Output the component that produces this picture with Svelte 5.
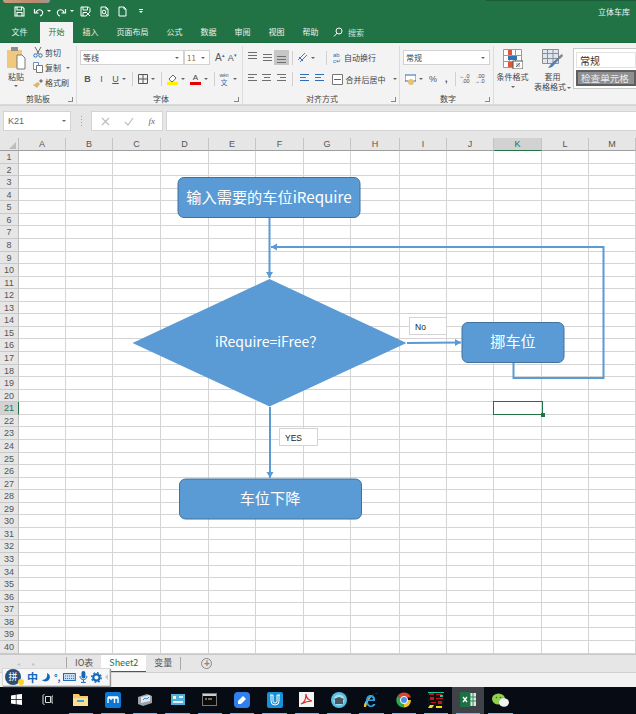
<script>
  const tabs = ["文件", "开始", "插入", "页面布局", "公式", "数据", "审阅", "视图", "帮助"];
  const cols = ["A", "B", "C", "D", "E", "F", "G", "H", "I", "J", "K", "L", "M"];
  const rows = Array.from({ length: 40 }, (_, i) => i + 1);
</script>

<div class="app">
  <div class="photo"></div>
  <div class="title-shadow"></div>

  <header class="titlebar">
    <div class="qat">
      <svg width="11" height="11" viewBox="0 0 11 11"><path d="M1 1h7.5L10 2.500V10H1zM3 1v3h4.500V1M3 10V6.500h5V10" fill="none" stroke="#fff" stroke-width="1.100" /></svg>
      <svg class="undo" width="11" height="11" viewBox="0 0 11 11"><path d="M3 6.500C4 3 8 3 9.500 5.500 10 7.500 8.500 9.500 7 10M1.500 3v4h4" fill="none" stroke="#fff" stroke-width="1.200" /></svg>
      <i class="caret light"></i>
      <svg class="redo" width="11" height="11" viewBox="0 0 11 11"><path d="M8 6.500C7 3 3 3 1.500 5.500 1 7.500 2.500 9.500 4 10M9.500 3v4h-4" fill="none" stroke="#fff" stroke-width="1.200" /></svg>
      <i class="caret light"></i>
      <svg class="save2" width="11" height="11" viewBox="0 0 11 11"><path d="M1 1h7.500L10 2.500V6M6 10H1V1M3 1v3h4.500V1M3 10V6.500h3M6 6l4 4M10 6l-4 4" fill="none" stroke="#fff" stroke-width="1" /></svg>
      <svg class="preview" width="11" height="11" viewBox="0 0 11 11"><path d="M2 10V1h5l2 2v7zM7 1v2h2" fill="none" stroke="#fff" /><circle cx="5" cy="6" r="1.800" fill="none" stroke="#fff" /><path d="M6.500 7.500L9 10" stroke="#fff" /></svg>
      <svg class="newdoc" width="11" height="11" viewBox="0 0 11 11"><path d="M2 10V1h5l2 2v7zM7 1v2h2" fill="none" stroke="#fff" /></svg>
      <span class="more">
        <b></b>
        <i class="caret light"></i>
      </span>
    </div>
    <span class="doc-name">立体车库</span>
  </header>

  <nav class="tabs">
    {#each tabs as tab}
      <span class="tab" class:active={tab === "开始"}>{tab}</span>
    {/each}
    <span class="search">
      <svg width="10" height="10" viewBox="0 0 10 10"><circle cx="6" cy="4" r="3" fill="none" stroke="#fff" /><path d="M4 6.200L1 9.500" stroke="#fff" /></svg>
      搜索
    </span>
  </nav>

  <section class="ribbon">
    <div class="group clipboard">
      <div class="group-body">
        <div class="paste">
          <svg width="19" height="23" viewBox="0 0 19 23">
            <rect x="0" y="3" width="15" height="18" fill="#f0c97f" />
            <rect x="4" y="0" width="7" height="4" fill="#8f8f8f" />
            <path d="M10 8h5l3 3v11h-8z" fill="#fff" stroke="#7a7a7a" />
          </svg>
          <span>粘贴</span>
          <i class="caret"></i>
        </div>
        <div class="clip-list">
          <div class="clip-item">
            <svg width="10" height="11" viewBox="0 0 10 11"><path d="M2 0l4 7M8 0L4 7" stroke="#666" fill="none" /><circle cx="2.500" cy="8.500" r="1.700" fill="none" stroke="#2f6db5" /><circle cx="7.500" cy="8.500" r="1.700" fill="none" stroke="#2f6db5" /></svg>
            剪切
          </div>
          <div class="clip-item">
            <svg width="10" height="11" viewBox="0 0 10 11"><path d="M.5.500h5v7h-5z" fill="#fff" stroke="#6c8ebf" /><path d="M3.500 3.500h6v7h-6z" fill="#fff" stroke="#777" /></svg>
            复制
            <i class="caret"></i>
          </div>
          <div class="clip-item">
            <svg width="10" height="10" viewBox="0 0 10 10"><path d="M0 7l5-3 2 2-3 4z" fill="#e0b56a" /><path d="M6 3l2-2 2 2-2 2z" fill="#777" /></svg>
            格式刷
          </div>
        </div>
      </div>
      <div class="group-label">剪贴板<i class="launcher"></i></div>
    </div>

    <div class="group font">
      <div class="group-body stack">
        <div class="row first">
          <div class="select font-name"><span>等线</span><i class="caret"></i></div>
          <div class="select font-size"><span>11</span><i class="caret"></i></div>
          <span class="glyph grow">A<sup>▴</sup></span>
          <span class="glyph shrink">A<sup>▾</sup></span>
        </div>
        <div class="row second">
          <b class="glyph fmt">B</b>
          <em class="glyph fmt">I</em>
          <u class="glyph fmt">U</u>
          <i class="caret"></i>
          <i class="sep"></i>
          <svg width="10" height="10" viewBox="0 0 10 10"><path d="M.5.500h9v9h-9zM5 .5v9M.5 5h9" fill="none" stroke="#555" /></svg>
          <i class="caret"></i>
          <i class="sep"></i>
          <span class="colored">
            <svg width="11" height="8" viewBox="0 0 11 8"><path d="M2 5l4-4 3 3-3 3.500H4z" fill="#fff" stroke="#666" /></svg>
            <i class="bar yellow"></i>
          </span>
          <i class="caret"></i>
          <span class="colored text-a">A<i class="bar red"></i></span>
          <i class="caret"></i>
          <i class="sep"></i>
          <span class="wen"><small>wén</small><span>文</span></span>
          <i class="caret"></i>
        </div>
      </div>
      <div class="group-label">字体<i class="launcher"></i></div>
    </div>

    <div class="group align">
      <div class="group-body stack">
        <div class="row first">
          <span class="lines top"><b></b><b></b><b class="short"></b></span>
          <span class="lines middle"><b></b><b></b><b class="short"></b></span>
          <span class="lines bottom on"><b></b><b></b><b class="short"></b></span>
          <i class="sep"></i>
          <svg width="11" height="11" viewBox="0 0 11 11"><path d="M1 8L8 1M3 10l7-7" stroke="#777" fill="none" /><path d="M2 5l4 4" stroke="#2f6db5" /></svg>
          <i class="caret"></i>
          <i class="sep wide"></i>
          <span class="ab"><small>ab</small><small>c↵</small></span>
          <span class="align-text">自动换行</span>
        </div>
        <div class="row second">
          <span class="lines"><b></b><b class="short"></b><b></b></span>
          <span class="lines centered"><b></b><b class="short"></b><b></b></span>
          <span class="lines right"><b></b><b class="short"></b><b></b></span>
          <i class="sep"></i>
          <span class="lines indent"><b></b><b class="short"></b><b></b></span>
          <span class="lines indent"><b></b><b class="short"></b><b></b></span>
          <svg class="merge" width="11" height="11" viewBox="0 0 11 11"><path d="M.5.500h10v10H.5z" fill="#fff" stroke="#777" /><path d="M2 5.500h7" stroke="#2f6db5" /></svg>
          <span class="align-text">合并后居中</span>
          <i class="caret wide-caret"></i>
        </div>
      </div>
      <div class="group-label">对齐方式<i class="launcher"></i></div>
    </div>

    <div class="group number">
      <div class="group-body stack">
        <div class="row first">
          <div class="select number-format"><span>常规</span><i class="caret"></i></div>
        </div>
        <div class="row second">
          <svg width="11" height="11" viewBox="0 0 11 11"><rect x="0" y="1" width="11" height="6" fill="#fff" stroke="#2f6db5" /><circle cx="6" cy="8" r="3" fill="#eac26f" /></svg>
          <i class="caret"></i>
          <span class="pct">%</span>
          <span class="comma">,</span>
          <i class="sep"></i>
          <span class="dec"><small>←.0</small><small>.00</small></span>
          <span class="dec"><small>.00</small><small>→.0</small></span>
        </div>
      </div>
      <div class="group-label">数字<i class="launcher"></i></div>
    </div>

    <div class="group styles">
      <div class="style-btn cond">
        <svg width="20" height="20" viewBox="0 0 20 20">
          <path d="M.5.500h18v18H.5zM.5 6.500h18M.5 12.500h18M6.500.5v18M12.500.5v18" fill="#fff" stroke="#9a9a9a" />
          <rect x="5" y="1" width="4" height="5" fill="#d9583b" />
          <rect x="5" y="7" width="9" height="4" fill="#2e75b6" />
          <rect x="5" y="13" width="5" height="5" fill="#d9583b" />
          <rect x="10" y="12" width="10" height="8" fill="#fff" stroke="#555" />
          <path d="M13 18l4-4M13 15h4M13 17h4" stroke="#555" stroke-width=".7" />
        </svg>
        <span>条件格式</span>
        <i class="caret"></i>
      </div>
      <div class="style-btn table">
        <svg width="21" height="20" viewBox="0 0 21 20">
          <path d="M.5.500h16v14H.5zM.5 4.500h16M.5 9.500h16M5.500.5v14M11 .5v14" fill="#dfe6f0" stroke="#8d8d8d" />
          <path d="M20 5L9 15l-3 4c2 0 5-1 6-3l8-9z" fill="#4f7fb8" />
          <path d="M20 5l-4 3 2 2 3-3z" fill="#888" />
        </svg>
        <span>套用</span>
        <span>表格格式<i class="caret inline"></i></span>
      </div>
      <div class="gallery">
        <div class="cell-style plain">常规</div>
        <div class="cell-style check">检查单元格</div>
      </div>
    </div>
  </section>

  <div class="formula-bar">
    <div class="name-box"><span>K21</span><i class="caret"></i></div>
    <div class="dots"></div>
    <div class="fx-box">
      <svg width="9" height="9" viewBox="0 0 9 9"><path d="M1 1l7 7M8 1L1 8" stroke="#bdbdbd" stroke-width="1.200" /></svg>
      <svg width="10" height="9" viewBox="0 0 10 9"><path d="M1 5l3 3 5-7" fill="none" stroke="#bdbdbd" stroke-width="1.200" /></svg>
      <em>fx</em>
    </div>
    <div class="formula-input"></div>
  </div>

  <main class="sheet">
    <div class="grid">
      <div class="corner"><b></b></div>
      {#each cols as col}
        <div class="col-head" class:selected={col === "K"}>{col}</div>
      {/each}
      {#each rows as row}
        <div class="row-head" class:selected={row === 21}>{row}</div>
        {#each cols as col}
          <div class="cell" class:current={col === "K" && row === 21}></div>
        {/each}
      {/each}
    </div>

    <svg class="chart" width="636" height="516" viewBox="0 138 636 516">
      <defs>
        <marker id="arrow" markerUnits="userSpaceOnUse" markerWidth="8" markerHeight="8" refX="6" refY="3.500" orient="auto">
          <path d="M0 0L6 3.500 0 7z" fill="#5b9bd5" />
        </marker>
      </defs>

      <path d="M269.500 218V278" class="link" marker-end="url(#arrow)" />
      <path d="M513.500 363V378H603.500V247H271" class="link loop" marker-end="url(#arrow)" />
      <path d="M407 343L461 342.500" class="link" marker-end="url(#arrow)" />
      <path d="M270 407V478" class="link" marker-end="url(#arrow)" />

      <rect class="shape" x="178" y="177.500" width="182" height="40" rx="6" />
      <text x="269" y="203" class="label large">输入需要的车位iRequire</text>

      <path d="M132.500 343L269.500 279 406.500 343 269.500 406.500z" class="diamond" />
      <text x="215" y="347" class="label start">iRequire=iFree？</text>

      <rect class="shape" x="462" y="322.500" width="102" height="40" rx="6" />
      <text x="513" y="347" class="label large">挪车位</text>

      <rect class="shape" x="179.500" y="479" width="182" height="40" rx="6" />
      <text x="270" y="504" class="label large">车位下降</text>

      <rect class="note" x="409.500" y="317.500" width="37" height="17" />
      <text x="415" y="330" class="note-text">No</text>
      <rect class="note" x="279.500" y="428.500" width="38" height="17" />
      <text x="285" y="441" class="note-text">YES</text>
    </svg>

    <div class="cell-cursor"><b></b></div>
  </main>

  <div class="sheet-tabs">
    <div class="nav-arrows"><span>◂</span><span>▸</span></div>
    <i class="tab-sep"></i>
    <span class="sheet-tab">IO表</span>
    <span class="sheet-tab active">Sheet2</span>
    <span class="sheet-tab">变量</span>
    <i class="tab-sep"></i>
    <span class="add-sheet">+</span>
  </div>

  <div class="statusbar"></div>

  <div class="ime">
    <span class="ime-logo"><em>拼</em><b></b></span>
    <span class="ime-zh">中</span>
    <svg width="10" height="11" viewBox="0 0 10 11"><path d="M6 1C7 5 5 8 1 8c3 3 8 1 8-3C9 3 8 2 6 1z" fill="#1467b8" /></svg>
    <span class="ime-dot">°,</span>
    <svg width="13" height="8" viewBox="0 0 13 8"><rect x=".5" y=".5" width="12" height="7" fill="#cfe2f5" stroke="#1467b8" /><path d="M2 3h9M2 5.500h9" stroke="#1467b8" stroke-dasharray="1 1" /></svg>
    <svg width="9" height="12" viewBox="0 0 9 12"><rect x="2.500" y="0" width="4" height="7.500" rx="2" fill="#1467b8" /><path d="M1 5c0 5 7 5 7 0M4.500 9v2M2 11.500h5" fill="none" stroke="#1467b8" /></svg>
    <svg width="11" height="11" viewBox="0 0 11 11"><circle cx="5.500" cy="5.500" r="3.200" fill="none" stroke="#1467b8" stroke-width="2.200" /><circle cx="5.500" cy="5.500" r="4.800" fill="none" stroke="#1467b8" stroke-width="1.400" stroke-dasharray="1.800 1.970" /></svg>
    <i class="ime-fold"></i>
  </div>

  <footer class="taskbar">
    <span class="task win">
      <svg width="11" height="11" viewBox="0 0 11 11"><path d="M0 1.500l4.800-.8v4.300H0zM5.500.6L11 0v5H5.500zM0 5.800h4.800v4.400L0 9.500zM5.500 5.800H11V11l-5.500-.8z" fill="#fff" /></svg>
    </span>
    <span class="task">
      <svg width="12" height="11" viewBox="0 0 12 11"><path d="M3.500 2.500h5v6h-5zM1 1v9M11 2h-1v7h1M2 0v1M2 10v1" fill="none" stroke="#ddd" /></svg>
    </span>
    <span class="task on">
      <svg width="15" height="13" viewBox="0 0 15 13"><path d="M0 1h6l1 2h8v10H0z" fill="#f6c86a" /><rect x="0" y="5" width="15" height="8" fill="#fbdf95" /><rect x="4" y="7" width="7" height="2" fill="#3ba1e0" /></svg>
    </span>
    <span class="task on">
      <svg width="16" height="16" viewBox="0 0 16 16"><rect width="16" height="16" rx="2" fill="#0a78d6" /><path d="M3 11V6h3v2M6.500 6h3v5M10 6h3v5M3 5h10" fill="none" stroke="#fff" stroke-width="1.400" /></svg>
    </span>
    <span class="task on">
      <svg width="16" height="14" viewBox="0 0 16 14"><path d="M1 4l9-3 5 2v7l-9 3-5-2z" fill="#9aa3ab" /><path d="M4 4l9-2v6l-9 2z" fill="#dfe8ee" /><path d="M6 7l2-2 2 1 2-2" stroke="#3b8ac4" fill="none" /></svg>
    </span>
    <span class="task on">
      <svg width="14" height="11" viewBox="0 0 14 11"><rect width="14" height="11" fill="#4fb0d9" /><rect x="2" y="2" width="3" height="3" fill="#fff3bd" /><rect x="8" y="2" width="4" height="2" fill="#d8efff" /><rect x="2" y="7" width="10" height="2" fill="#d8efff" /></svg>
    </span>
    <span class="task on">
      <svg width="15" height="13" viewBox="0 0 15 13"><rect x=".5" y=".5" width="14" height="12" fill="#0c0c0c" stroke="#777" /><rect x="1" y="1" width="13" height="2" fill="#cfcfcf" /><path d="M3 6h2M6 6h4" stroke="#ccc" /></svg>
    </span>
    <span class="task on">
      <svg width="16" height="16" viewBox="0 0 16 16"><rect width="16" height="16" rx="4" fill="#2f80ed" /><path d="M4 9l5-5 3 3-5 5H4z" fill="#fff" /></svg>
    </span>
    <span class="task on">
      <svg width="16" height="16" viewBox="0 0 16 16"><rect width="16" height="16" rx="2" fill="#1690d8" /><path d="M4 3v6a4 4 0 0 0 8 0V3M3 3h3M10 3h3M6 3v6a2 2 0 0 0 4 0V3" fill="none" stroke="#fff" /></svg>
    </span>
    <span class="task on">
      <svg width="15" height="15" viewBox="0 0 15 15"><rect width="15" height="15" fill="#f4f4f4" /><path d="M2 12c3-1 5-5 5-10 0 4 2 6 6 7-4 0-7 1-11 3z" fill="none" stroke="#d92a2a" stroke-width="1.200" /></svg>
    </span>
    <span class="task on">
      <svg width="16" height="16" viewBox="0 0 16 16"><circle cx="8" cy="8" r="8" fill="#58bfe0" /><circle cx="8" cy="8" r="5.500" fill="#9fdcee" /><path d="M3 7l5-2 5 2-1 1v4H4V8z" fill="#4a5660" /></svg>
    </span>
    <span class="task on">
      <svg width="16" height="16" viewBox="0 0 16 16"><path d="M1 15C0 11 6 3 15 1c-4 0-10 6-12 14z" fill="#f2c230" /><path d="M3 9h9c1-4-2-6-4.500-6S3 5 3 9s2.500 6 5 6 4-1 4.500-3H10c-.5 1-1.500 1.500-2.500 1.500S5 12 5 10h0M5 7.500h5C10 6 9 5 7.500 5S5 6 5 7.500z" fill="#2aa3e6" fill-rule="evenodd" /></svg>
    </span>
    <span class="task on">
      <svg width="16" height="16" viewBox="0 0 16 16"><path d="M8 8L1.500 4A7.500 7.500 0 0 1 15 5.500H8z" fill="#e0452f" /><path d="M8 8h7a7.500 7.500 0 0 1-7 7.500z" fill="#f6c02d" /><path d="M8 8v7.500A7.500 7.500 0 0 1 1.500 4z" fill="#2fa84f" /><circle cx="8" cy="8" r="3.600" fill="#4a8ef0" stroke="#fff" /></svg>
    </span>
    <span class="task on">
      <svg width="16" height="16" viewBox="0 0 16 16"><rect width="16" height="16" fill="#111" /><path d="M1 1h5v2H1zM8 2h6v1H8zM2 5h4v3H2zM8 6h7v1H8zM3 10h5v1H3zM10 9h4v3h-4z" fill="#c4161c" /><path d="M2 13h4l-2 3H0zM8 14h6v2H8z" fill="#f5dc17" /><path d="M0 0h16v1H0zM12 3h3v2h-3z" fill="#17c7a5" /></svg>
    </span>
    <span class="task on current">
      <svg width="16" height="15" viewBox="0 0 16 15"><rect x="5" y="1" width="11" height="13" fill="#d8e9de" /><path d="M10 1v13M13 1v13M5 5h11M5 9h11" stroke="#2c8a58" /><rect x="0" y="0" width="10" height="15" fill="#1d7044" /><path d="M3 5l4 5M7 5l-4 5" stroke="#fff" stroke-width="1.300" /></svg>
    </span>
    <span class="task on">
      <svg width="17" height="14" viewBox="0 0 17 14"><ellipse cx="6.500" cy="6" rx="6.500" ry="5.500" fill="#8fd14f" /><ellipse cx="12" cy="9.500" rx="5" ry="4.200" fill="#f3f3f3" /><circle cx="4.500" cy="4.500" r=".8" fill="#3d6b1c" /><circle cx="8.500" cy="4.500" r=".8" fill="#3d6b1c" /></svg>
    </span>
  </footer>
</div>

<style>
  :global(body) {
    margin: 0;
    background: #fff;
  }

  * {
    box-sizing: border-box;
  }

  i {
    font-style: normal;
  }

  .app {
    position: relative;
    width: 636px;
    height: 714px;
    display: flex;
    flex-direction: column;
    overflow: hidden;
    font-family: "Noto Sans CJK SC", "Liberation Sans", sans-serif;
    font-size: 8px;
    color: #444;
  }

  .photo {
    position: absolute;
    left: 3px;
    top: 0;
    width: 47px;
    height: 3px;
    border-radius: 0 0 3px 3px;
    background: linear-gradient(90deg, #c99b7c, #b98a6c 70%, #9a9a9a);
    z-index: 2;
  }

  .title-shadow {
    position: absolute;
    left: 486px;
    top: 0;
    width: 150px;
    height: 1px;
    background: #1a5c38;
  }

  .titlebar {
    height: 22px;
    flex: none;
    display: flex;
    align-items: center;
    justify-content: space-between;
    padding: 0 6px 0 14px;
    background: #217346;
    color: #fff;
  }

  .qat {
    display: flex;
    align-items: center;
  }

  .undo {
    margin-left: 8px;
  }

  .redo {
    margin-left: 4.500px;
  }

  .save2 {
    margin-left: 6px;
  }

  .preview {
    margin-left: 8px;
  }

  .newdoc {
    margin-left: 7px;
  }

  .more {
    display: flex;
    flex-direction: column;
    align-items: center;
    gap: 1px;
    margin-left: 11px;
  }

  .more b {
    width: 4px;
    height: 1px;
    background: #fff;
  }

  .more .caret {
    margin: 0;
  }

  .doc-name {
    font-size: 8px;
    color: #f0f6f2;
  }

  .caret {
    display: inline-block;
    flex: none;
    width: 0;
    height: 0;
    margin-left: 3px;
    border: 2px solid transparent;
    border-top: 2.500px solid #666;
    border-bottom: 0;
  }

  .caret.light {
    border-top-color: #fff;
  }

  .caret.inline {
    vertical-align: 1px;
  }

  .tabs {
    height: 21px;
    flex: none;
    display: flex;
    align-items: stretch;
    padding-left: 3px;
    gap: 1px;
    background: #217346;
    border-bottom: 1px solid #1c6a3f;
    color: #e9f3ed;
  }

  .tab {
    padding: 0 8.500px;
    line-height: 20px;
  }

  .tab.active {
    margin-left: 3px;
    height: 21px;
    color: #217346;
    background: #f3f3f3;
  }

  .search {
    display: flex;
    align-items: center;
    gap: 5px;
    margin-left: 5px;
    color: #cfe3d7;
  }

  .ribbon {
    height: 62px;
    flex: none;
    display: flex;
    background: #f3f3f3;
    border-bottom: 1px solid #dadada;
  }

  .group {
    display: flex;
    flex-direction: column;
    border-right: 1px solid #dcdcdc;
    margin: 3px 0 0;
    height: 58px;
  }

  .group-body {
    flex: 1;
    display: flex;
    min-height: 0;
  }

  .stack {
    flex-direction: column;
  }

  .group-label {
    position: relative;
    height: 13px;
    line-height: 16px;
    text-align: center;
    color: #444;
  }

  .launcher {
    position: absolute;
    right: 3px;
    top: 6px;
    width: 5px;
    height: 5px;
    border-right: 1px solid #888;
    border-bottom: 1px solid #888;
  }

  .clipboard {
    width: 77px;
  }

  .paste {
    width: 30px;
    padding-top: 1px;
    display: flex;
    flex-direction: column;
    align-items: center;
    padding-left: 2px;
  }

  .paste span {
    line-height: 12px;
    margin-top: 1px;
  }

  .paste .caret {
    margin: 2px 0 0;
  }

  .clip-list {
    display: flex;
    flex-direction: column;
    margin-top: -1px;
    padding-left: 3px;
  }

  .clip-item {
    display: flex;
    align-items: center;
    gap: 2px;
    height: 15px;
    white-space: nowrap;
  }

  .row {
    display: flex;
    align-items: center;
  }

  .row.first {
    height: 17px;
    margin-top: 3px;
  }

  .row.second {
    height: 16px;
    margin-top: 5px;
  }

  .font {
    width: 166px;
    padding-left: 3px;
  }

  .select {
    height: 15px;
    display: flex;
    align-items: center;
    justify-content: space-between;
    padding: 0 4px 0 2px;
    background: #fff;
    border: 1px solid #d2d2d2;
  }

  .font-name {
    width: 104px;
  }

  .font-size {
    width: 26px;
    margin-left: 0;
    color: #a86a1a;
  }

  .glyph {
    font-family: "Liberation Sans", sans-serif;
    font-size: 9px;
    font-style: normal;
    color: #555;
  }

  .grow {
    margin-left: 5px;
    font-size: 10px;
  }

  .shrink {
    margin-left: 3px;
  }

  .glyph sup {
    font-size: 5px;
    color: #2f6db5;
    vertical-align: 4px;
    line-height: 0;
  }

  .second .fmt {
    margin-left: 7px;
    width: 7px;
    text-align: center;
  }

  .second .fmt:first-child {
    margin-left: 4px;
  }

  .sep {
    flex: none;
    width: 1px;
    height: 14px;
    margin: 0 5px 0 6px;
    background: #d0d0d0;
  }

  .colored {
    display: inline-flex;
    flex-direction: column;
    align-items: center;
    width: 11px;
    font-family: "Liberation Sans", sans-serif;
    font-size: 8px;
    line-height: 8px;
  }

  .bar {
    display: block;
    width: 11px;
    height: 3px;
  }

  .yellow {
    background: #ffef00;
  }

  .red {
    background: #e60000;
  }

  .text-a {
    margin-left: 5px;
  }

  .wen {
    display: inline-flex;
    flex-direction: column;
    align-items: center;
    width: 12px;
    margin-left: -2px;
    color: #2f6db5;
  }

  .wen small {
    display: block;
    height: 6px;
    overflow: hidden;
    font-family: "Liberation Sans", sans-serif;
    font-size: 5px;
    line-height: 6px;
    color: #555;
  }

  .wen span {
    display: block;
    height: 8px;
    overflow: hidden;
    font-size: 7px;
    line-height: 8px;
  }

  .align {
    width: 157px;
    padding-left: 2px;
  }

  .align .sep {
    margin: 0 4px 0 3.500px;
  }

  .lines {
    display: inline-flex;
    flex-direction: column;
    gap: 2px;
    flex: none;
    width: 14.500px;
    height: 15px;
    padding: 2px 3px;
    justify-content: flex-start;
    align-items: flex-start;
  }

  .lines b {
    display: block;
    width: 9px;
    height: 1px;
    background: #6f6f6f;
  }

  .lines .short {
    width: 6px;
  }

  .lines.middle {
    justify-content: center;
  }

  .lines.bottom {
    justify-content: flex-end;
  }

  .lines.top .short,
  .lines.middle .short,
  .lines.bottom .short {
    width: 9px;
  }

  .lines.on {
    background: #c6c6c6;
  }

  .lines.centered {
    align-items: center;
  }

  .lines.right {
    align-items: flex-end;
  }

  .lines.indent b:first-child,
  .lines.indent b:last-child {
    background: #2f6db5;
  }

  .align .sep.wide {
    margin: 0 6px 0 11px;
  }

  .ab {
    display: inline-flex;
    flex-direction: column;
    width: 8px;
    line-height: 6px;
    color: #2f6db5;
  }

  .ab small {
    font-size: 6px;
    font-family: "Liberation Sans", sans-serif;
  }

  .align-text {
    margin-left: 3px;
    white-space: nowrap;
  }

  .merge {
    margin-left: 5.500px;
  }

  .wide-caret {
    margin-left: 7px;
  }

  .number {
    width: 94px;
    padding-left: 3px;
  }

  .number-format {
    width: 87px;
  }

  .number .second {
    padding-left: 2px;
  }

  .number .sep {
    margin: 0 1px 0 7px;
  }

  .pct {
    margin-left: 6px;
    font-family: "Liberation Sans", sans-serif;
    font-size: 9px;
    color: #555;
  }

  .comma {
    margin-left: 8px;
    font-family: "Liberation Sans", sans-serif;
    font-size: 9px;
    font-weight: 700;
    line-height: 9px;
  }

  .dec {
    display: inline-flex;
    flex-direction: column;
    width: 13px;
    margin-right: 2px;
    line-height: 5px;
    align-items: flex-end;
    font-family: "Liberation Sans", sans-serif;
  }

  .dec small {
    font-size: 5.500px;
  }

  .styles {
    flex: 1;
    flex-direction: row;
    border-right: 0;
    align-items: flex-start;
  }

  .style-btn {
    display: flex;
    flex-direction: column;
    align-items: center;
    line-height: 10px;
    white-space: nowrap;
  }

  .style-btn svg {
    margin-bottom: 3px;
  }

  .style-btn .caret {
    margin-left: 1px;
  }

  .cond {
    width: 37px;
    padding-top: 3px;
  }

  .cond .caret {
    margin-top: 4px;
  }

  .table {
    width: 42px;
    padding-top: 3px;
    padding-left: 1px;
  }

  .gallery {
    flex: 1;
    height: 41px;
    margin: 2px 0 0 0;
    padding: 3px 0 0 2px;
    background: #fff;
    border: 1px solid #c8c8c8;
    border-right: 0;
  }

  .cell-style {
    height: 16px;
    padding-left: 3px;
    line-height: 15px;
    white-space: nowrap;
  }

  .plain {
    margin-bottom: 2px;
    border: 1px solid #e2e2e2;
    font-size: 10px;
    color: #333;
  }

  .check {
    background: #8f8f8f;
    border: 2px solid #5f5f5f;
    font-size: 9.600px;
    line-height: 12px;
    color: #ececec;
  }

  .formula-bar {
    height: 33px;
    flex: none;
    display: flex;
    padding: 5px 0 7px 3px;
    background: #e6e6e6;
    border-top: 1px solid #d4d4d4;
  }

  .name-box {
    width: 68px;
    display: flex;
    align-items: center;
    justify-content: space-between;
    padding: 0 4px;
    background: #fff;
    border: 1px solid #d4d4d4;
    font-family: "Liberation Sans", sans-serif;
    font-size: 9px;
    color: #666;
  }

  .dots {
    width: 20px;
    margin: 5px 0;
    background: linear-gradient(#a8a8a8, #a8a8a8) center / 1px 100% no-repeat;
    mask: repeating-linear-gradient(#000 0 1px, transparent 1px 3px);
  }

  .fx-box {
    width: 72px;
    display: flex;
    align-items: center;
    justify-content: space-between;
    padding: 0 7px 0 9px;
    background: #fff;
    border: 1px solid #d4d4d4;
  }

  .fx-box em {
    font-family: "Liberation Serif", serif;
    font-size: 9px;
    color: #666;
  }

  .formula-input {
    flex: 1;
    margin-left: 3px;
    background: #fff;
    border: 1px solid #d4d4d4;
    border-right: 0;
  }

  .sheet {
    position: relative;
    flex: 1;
    min-height: 0;
    overflow: hidden;
    background: #fff;
  }

  .grid {
    display: grid;
    grid-template-columns: 19px 47px 47px 48px 48px 47px 48px 47px 49px 47px 47px 48px 47px 47px;
    grid-template-rows: 13px repeat(40, 12.570px);
  }

  .corner {
    position: relative;
    background: #e6e6e6;
    border-right: 1px solid #bdbdbd;
    border-bottom: 1px solid #9f9f9f;
  }

  .corner b {
    position: absolute;
    right: 2px;
    bottom: 1px;
    border-left: 7px solid transparent;
    border-bottom: 7px solid #bdbdbd;
  }

  .col-head {
    background: #e6e6e6;
    border-right: 1px solid #c4c4c4;
    border-bottom: 1px solid #9f9f9f;
    font-family: "Liberation Sans", sans-serif;
    font-size: 9px;
    line-height: 12px;
    text-align: center;
    color: #555;
  }

  .col-head.selected {
    background: #d2d2d2;
    border-bottom: 1px solid #217346;
    color: #217346;
  }

  .row-head {
    background: #e6e6e6;
    border-right: 1px solid #bdbdbd;
    border-bottom: 1px solid #c9c9c9;
    font-family: "Liberation Sans", sans-serif;
    font-size: 9px;
    line-height: 12px;
    text-align: center;
    color: #555;
  }

  .row-head.selected {
    background: #d2d2d2;
    border-right: 1px solid #217346;
    color: #217346;
  }

  .cell {
    border-right: 1px solid #d4d4d4;
    border-bottom: 1px solid #d4d4d4;
  }

  .chart {
    position: absolute;
    left: 0;
    top: 0;
  }

  .link {
    fill: none;
    stroke: #5b9bd5;
    stroke-width: 2;
  }

  .shape {
    fill: #5b9bd5;
    stroke: #41719c;
    stroke-width: 1;
  }

  .diamond {
    fill: #5b9bd5;
  }

  .label {
    fill: #fff;
    font-size: 14px;
    text-anchor: middle;
  }

  .label.start {
    text-anchor: start;
  }

  .label.large {
    font-size: 15.200px;
  }

  .note {
    fill: #fff;
    stroke: #d4d4d4;
  }

  .note-text {
    fill: #222;
    font-family: "Liberation Sans", sans-serif;
    font-size: 8.500px;
  }

  .cell-cursor {
    position: absolute;
    left: 493px;
    top: 263px;
    width: 50px;
    height: 14px;
    border: 1.500px solid #217346;
  }

  .cell-cursor b {
    position: absolute;
    right: -3px;
    bottom: -3px;
    width: 4px;
    height: 4px;
    background: #217346;
  }

  .sheet-tabs {
    height: 19px;
    flex: none;
    display: flex;
    align-items: center;
    background: #e6e6e6;
    border-top: 1px solid #c8c8c8;
    border-bottom: 1px solid #d0d0d0;
    font-size: 9px;
    color: #555;
  }

  .nav-arrows {
    display: flex;
    gap: 12px;
    width: 66px;
    padding-left: 17px;
    color: #c4c4c4;
    font-size: 6px;
  }

  .tab-sep {
    width: 1px;
    height: 13px;
    background: #a8a8a8;
  }

  .sheet-tab {
    padding: 0 8px;
    height: 17px;
    line-height: 15px;
  }

  .sheet-tab.active {
    width: 45px;
    padding: 0;
    text-align: center;
    background: #fff;
    border-bottom: 1px solid #217346;
    color: #217346;
  }

  .add-sheet {
    width: 11px;
    height: 11px;
    margin-left: 20px;
    border: 1px solid #888;
    border-radius: 50%;
    font-family: "Liberation Sans", sans-serif;
    font-size: 10px;
    font-weight: 700;
    line-height: 9px;
    text-align: center;
    color: #888;
  }

  .statusbar {
    height: 14px;
    flex: none;
    background: #f2f2f2;
  }

  .ime {
    position: absolute;
    left: 2px;
    top: 668px;
    width: 108px;
    height: 18px;
    display: flex;
    align-items: center;
    gap: 3px;
    padding-left: 2px;
    background: #f7f7f7;
    border: 1px solid #d8d8d8;
    box-shadow: 1px 1px 1px #999;
    color: #1467b8;
  }

  .ime-logo {
    position: relative;
    flex: none;
    width: 16px;
    height: 16px;
    margin-right: 3px;
    border-radius: 50%;
    background: #2a4f78;
    font-size: 9px;
    line-height: 15px;
    text-align: center;
    color: #fff;
  }

  .ime-logo em {
    font-style: normal;
  }

  .ime-logo b {
    position: absolute;
    right: -3px;
    bottom: 0;
    width: 6px;
    height: 6px;
    border-radius: 50%;
    background: #ffd21f;
  }

  .ime-zh {
    font-size: 11px;
    font-weight: 700;
    line-height: 14px;
  }

  .ime-dot {
    font-size: 9px;
    font-weight: 700;
  }

  .ime-fold {
    margin-left: auto;
    margin-right: 1px;
    border: 3px solid transparent;
    border-right: 3px solid #ccc;
    border-left: 0;
  }

  .taskbar {
    height: 27px;
    flex: none;
    display: flex;
    background: #070b13;
  }

  .task {
    position: relative;
    flex: none;
    width: 32.300px;
    display: flex;
    align-items: center;
    justify-content: center;
    padding-bottom: 2px;
  }

  .task.on::after {
    content: "";
    position: absolute;
    left: 4px;
    right: 4px;
    bottom: 0;
    height: 1px;
    background: #7cb6e6;
  }

  .task.current {
    background: #3f4347;
  }
</style>
